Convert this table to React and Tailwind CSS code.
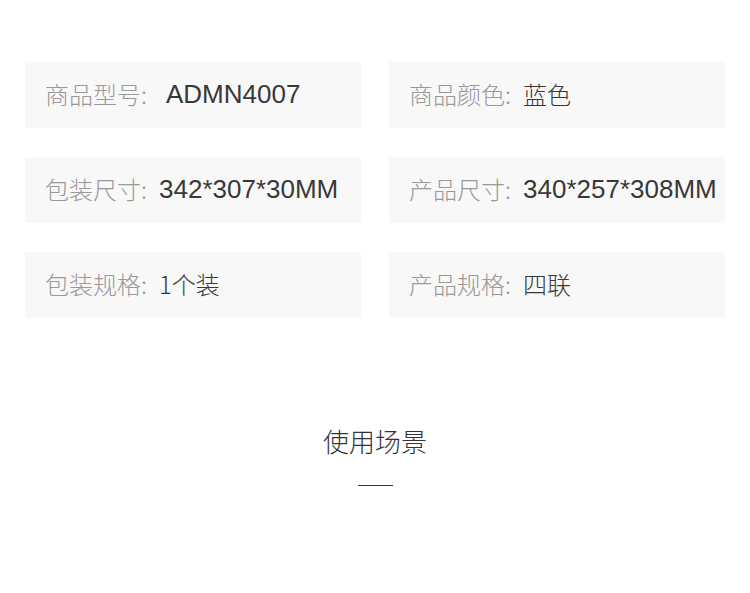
import React from 'react';

const specs = [
  { label: '商品型号', value: 'ADMN4007', latin: true, gap: 'ml-[19px]' },
  { label: '商品颜色', value: '蓝色' },
  { label: '包装尺寸', value: '342*307*30MM', latin: true },
  { label: '产品尺寸', value: '340*257*308MM', latin: true },
  { label: '包装规格', value: '1个装' },
  { label: '产品规格', value: '四联' },
];

export default function App() {
  return (
    <div
      className="w-[750px] h-[593px] bg-white overflow-hidden"
      style={{ fontFamily: '"Noto Sans CJK SC", "Noto Sans", sans-serif' }}
    >
      {/* spec grid */}
      <div className="grid grid-cols-2 gap-x-[28px] gap-y-[29px] pt-[62px] px-[25px]">
        {specs.map((s) => (
          <div key={s.label} className="h-[66px] bg-[#f8f8f8] flex items-center pl-[20px] pb-[2px] whitespace-nowrap text-[24px] font-light">
            <span className="text-[#999999]">{s.label}:</span>
            <span
              className={`text-[#383838] ${s.gap || 'ml-[12px]'} ${
                s.latin ? "font-['Liberation_Sans',sans-serif] text-[26px] font-normal" : ''
              }`}
            >
              {s.value}
            </span>
          </div>
        ))}
      </div>

      {/* section title */}
      <div className="flex flex-col items-center mt-[105px]">
        <h2 className="text-[26px] font-light text-[#333333] leading-[36px]">使用场景</h2>
        <div className="w-[35px] h-px bg-[#333333] mt-[26px]" />
      </div>
    </div>
  );
}
